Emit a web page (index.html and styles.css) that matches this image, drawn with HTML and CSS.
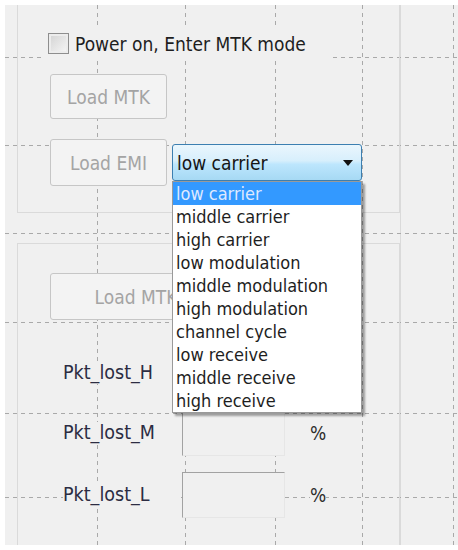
FILE: index.html
```html
<!DOCTYPE html>
<html lang="en">
    <head>
        <meta charset="UTF-8" />
        <title>MTK / EMI test</title>
        <link rel="stylesheet" href="styles.css">
    </head>
    <body>
        <div class="form">
            <!-- GROUP 1: MODE + EMI -->
            <div class="group group-top">
                <label class="check-row">
                    <span class="check"></span>
                    <span>Power on, Enter MTK mode</span>
                </label>

                <button class="btn btn-load">Load MTK</button>

                <div class="emi-row">
                    <button class="btn btn-emi">Load EMI</button>
                    <div class="combo-wrap">
                        <div class="combo">
                            <span>low carrier</span>
                            <svg class="arrow" width="10" height="6" viewBox="0 0 10 6">
                                <path d="M0 0 H10 L5 6 Z" fill="#111" />
                            </svg>
                        </div>
                        <ul class="dropdown">
                            <li class="selected">low carrier</li>
                            <li>middle carrier</li>
                            <li>high carrier</li>
                            <li>low modulation</li>
                            <li>middle modulation</li>
                            <li>high modulation</li>
                            <li>channel cycle</li>
                            <li>low receive</li>
                            <li>middle receive</li>
                            <li>high receive</li>
                        </ul>
                    </div>
                </div>
            </div>

            <!-- GROUP 2: PACKET LOSS -->
            <div class="group group-bottom">
                <button class="btn btn-load2">Load MTK</button>

                <div class="pkt-row row-h">
                    <span class="pkt-label">Pkt_lost_H</span>
                    <span class="pkt-box"></span>
                    <span class="pkt-unit">%</span>
                </div>
                <div class="pkt-row row-m">
                    <span class="pkt-label">Pkt_lost_M</span>
                    <span class="pkt-box"></span>
                    <span class="pkt-unit">%</span>
                </div>
                <div class="pkt-row row-l">
                    <span class="pkt-label">Pkt_lost_L</span>
                    <span class="pkt-box"></span>
                    <span class="pkt-unit">%</span>
                </div>
            </div>
        </div>
    </body>
</html>
```

FILE: styles.css
```css
/* MTK / EMI FORM */
* {
    box-sizing: border-box;
    margin: 0;
    padding: 0;
}

body {
    background: white;
    font-family: "DejaVu Sans Condensed", "DejaVu Sans", sans-serif;
    font-stretch: condensed;
    font-size: 19px;
    color: #1e1e1e;
    overflow: hidden;
}

/* designer grid: dashed layout lines drawn as background layers */
.form {
    width: 453px;
    height: 540px;
    margin: 5px 0 0 5px;
    background-color: #f0f0f0;
    background-image:
        repeating-linear-gradient(to bottom, #a9a9a9 0 4px, transparent 4px 8px),
        repeating-linear-gradient(to bottom, #a9a9a9 0 4px, transparent 4px 8px),
        repeating-linear-gradient(to bottom, #a9a9a9 0 4px, transparent 4px 8px),
        repeating-linear-gradient(to bottom, #a9a9a9 0 4px, transparent 4px 8px),
        repeating-linear-gradient(to bottom, #a9a9a9 0 4px, transparent 4px 8px),
        repeating-linear-gradient(to right, #a9a9a9 0 4px, transparent 4px 8px),
        repeating-linear-gradient(to right, #a9a9a9 0 4px, transparent 4px 8px),
        repeating-linear-gradient(to right, #a9a9a9 0 4px, transparent 4px 8px),
        repeating-linear-gradient(to right, #a9a9a9 0 4px, transparent 4px 8px),
        repeating-linear-gradient(to right, #a9a9a9 0 4px, transparent 4px 8px),
        repeating-linear-gradient(to right, #a9a9a9 0 4px, transparent 4px 8px),
        linear-gradient(#dadada, #dadada);
    background-size:
        1px 100%, 1px 100%, 1px 100%, 1px 100%, 1px 100%,
        100% 1px, 100% 1px, 100% 1px, 100% 1px, 100% 1px, 100% 1px,
        1px 100%;
    background-position:
        92px 0, 180px 0, 270px 0, 357px 0, 448px 0,
        0 52px, 0 140px, 0 228px, 0 317px, 0 408px, 0 492px,
        395px 0;
    background-repeat: no-repeat;
}

.group {
    width: 383px;
    margin-left: 12px;
    border: 1px solid #dadada;
    padding-left: 30px;
}

.group-top {
    height: 208px;
    border-top: none;
    padding-top: 28px;
}

.group-bottom {
    height: 302px;
    margin-top: 30px;
    border-bottom: none;
    padding-top: 29px;
}

.check-row {
    display: flex;
    align-items: center;
    gap: 6px;
    width: 277px;
    height: 21px;
    background: #f0f0f0;
    box-shadow: 0 0 0 4px #f0f0f0;
}

.check {
    flex: none;
    width: 21px;
    height: 21px;
    border: 1px solid #8e8e8e;
    background: linear-gradient(135deg, #d2d2d2, #f7f7f7);
    box-shadow: inset 0 0 0 2px #ececec;
}

.btn {
    display: block;
    font-family: inherit;
    font-stretch: condensed;
    font-size: 19px;
    color: #a4a4a4;
    background: #f3f3f3;
    border: 1px solid #c6c6c6;
    border-radius: 3px;
}

.btn-load {
    width: 117px;
    height: 45px;
    margin: 20px 0 0 2px;
}

.emi-row {
    display: flex;
    align-items: center;
    gap: 5px;
    margin: 20px 0 0 2px;
}

.btn-emi {
    width: 117px;
    height: 47px;
}

.combo-wrap {
    position: relative;
}

.combo {
    display: flex;
    align-items: center;
    justify-content: space-between;
    width: 190px;
    height: 37px;
    padding: 0 8px 0 4px;
    color: #151515;
    background: linear-gradient(to bottom, #eaf6fd 0%, #d7effc 45%, #bde6fd 55%, #a6d9f4 100%);
    border: 1px solid #3c7fb1;
    border-radius: 3px;
}

.dropdown {
    position: absolute;
    top: 100%;
    left: 0;
    width: 190px;
    list-style: none;
    font-size: 18px;
    background: white;
    border: 1px solid #9a9a9a;
    box-shadow: 3px 3px 2px rgba(0, 0, 0, 0.35);
    z-index: 5;
}

.dropdown li {
    height: 23px;
    line-height: 23px;
    padding-left: 3px;
    color: #1e1e1e;
}

.dropdown .selected {
    color: #dfe9ff;
    background: #3399ff;
}

.btn-load2 {
    width: 172px;
    height: 47px;
    margin-left: 2px;
}

.pkt-row {
    display: flex;
    align-items: center;
    height: 46px;
}

.row-h {
    margin-top: 30px;
}

.row-m {
    margin-top: 14px;
}

.row-l {
    margin-top: 16px;
}

.pkt-label {
    width: 117px;
    margin-left: 15px;
    font-size: 19.5px;
    line-height: 22px;
    color: #2c2c42;
    background: #f0f0f0;
}

.pkt-box {
    width: 103px;
    height: 46px;
    margin-left: 2px;
    background: #f0f0f0;
    border-top: 1px solid #a2a2a2;
    border-left: 1px solid #a2a2a2;
    border-right: 1px solid #e6e6e6;
    border-bottom: 1px solid #e6e6e6;
}

.pkt-unit {
    margin-left: 25px;
    color: #2c2c2c;
    background: #f0f0f0;
}
```
